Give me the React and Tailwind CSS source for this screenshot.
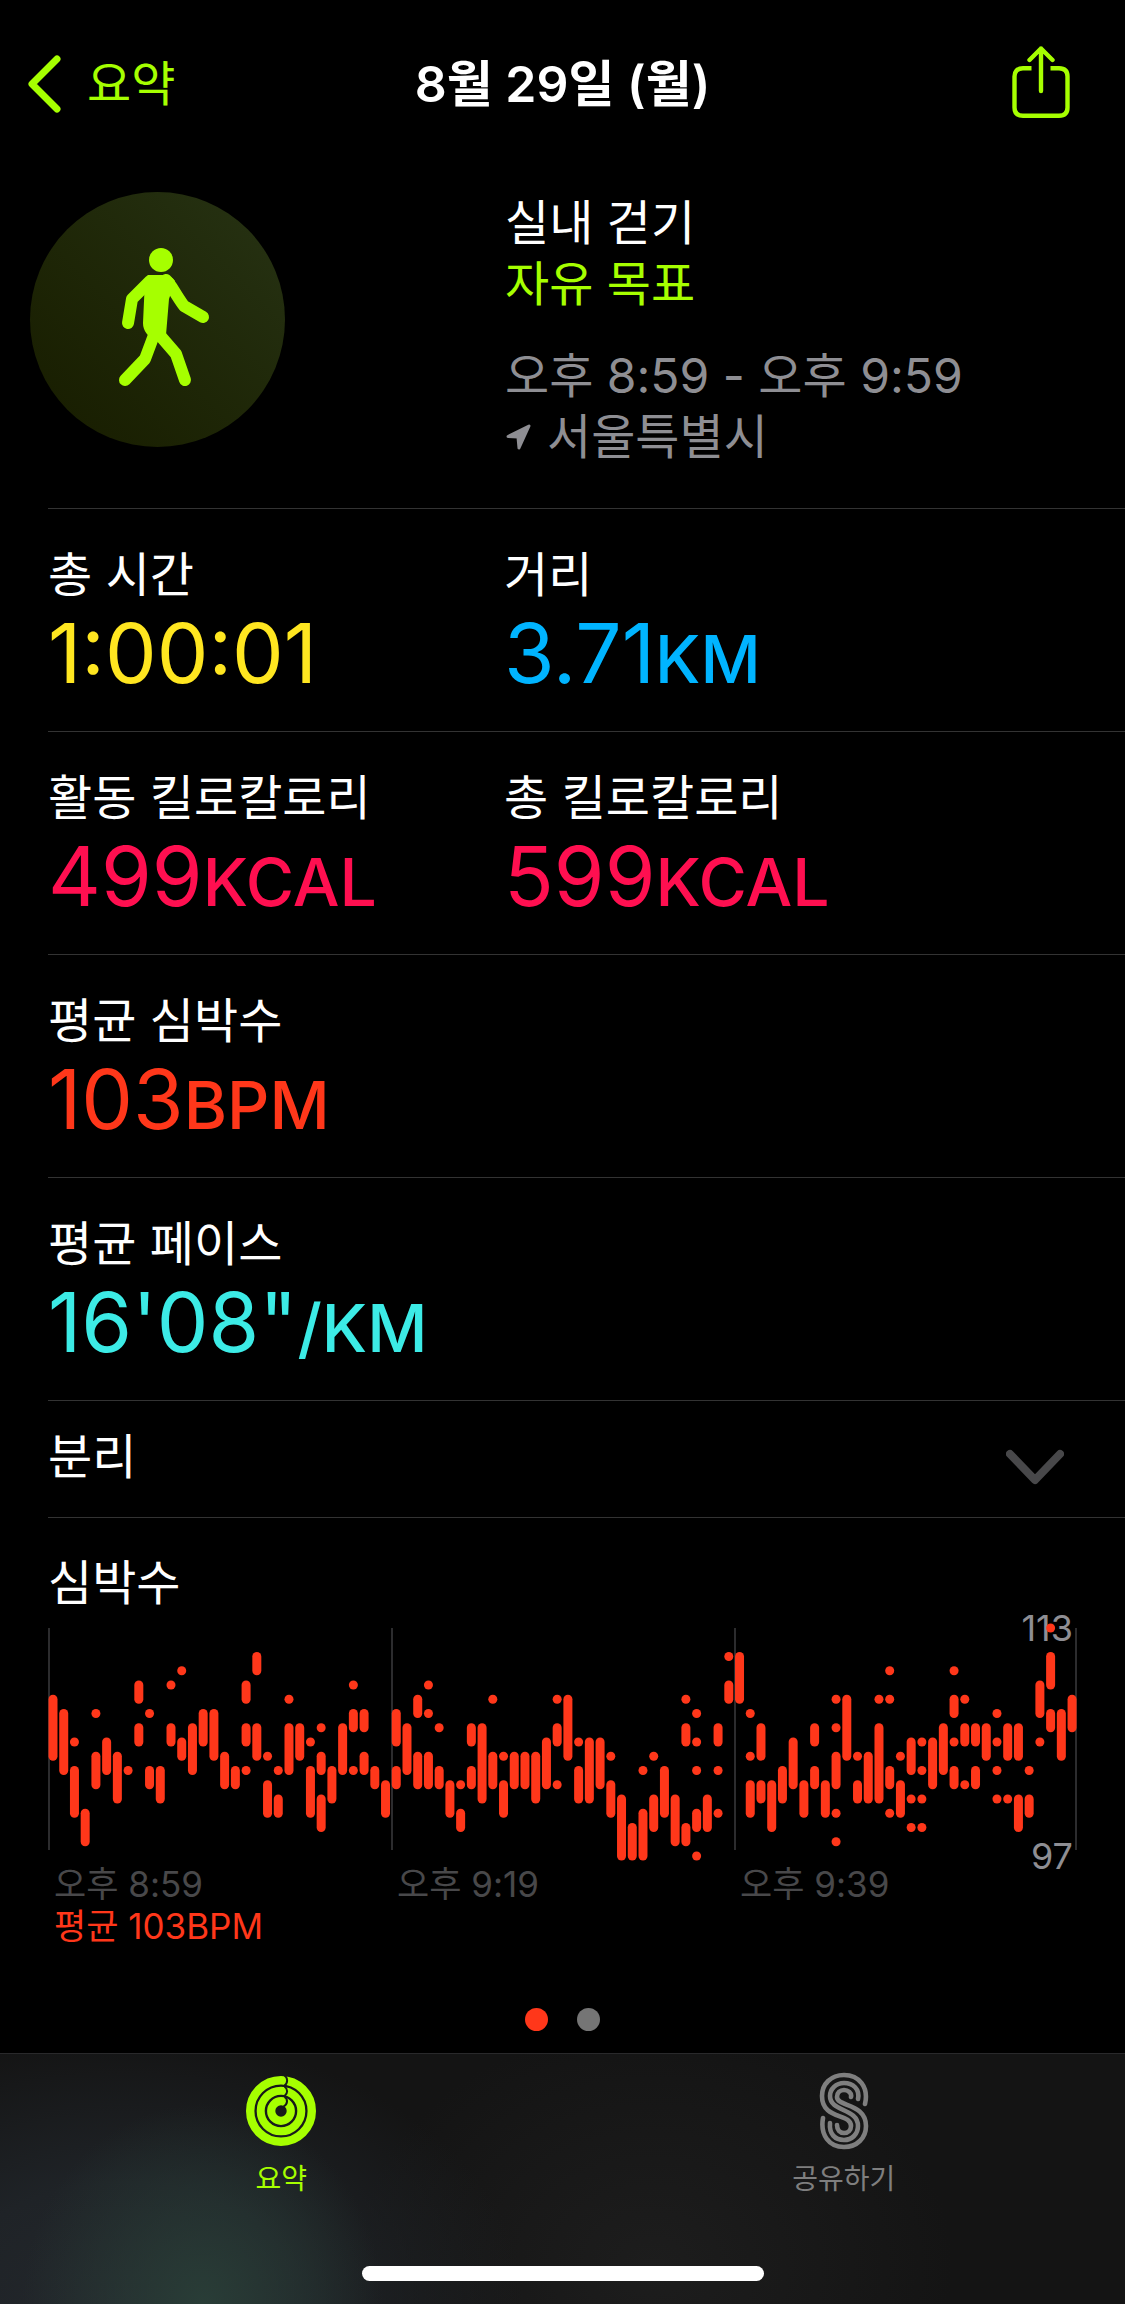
import React, { useState } from "react";

const GREEN = "#a6ff00";
const RED = "#ff371a";

// each slot lists [high, low] ranges in bpm, a lone value is [n, n]
const heartRate = [
  [[108, 104]],
  [[107, 103]],
  [[105, 105], [103, 100]],
  [[100, 98]],
  [[107, 107], [104, 102]],
  [[105, 103]],
  [[104, 101]],
  [[103, 103]],
  [[109, 108], [106, 105]],
  [[107, 107], [103, 102]],
  [[103, 101]],
  [[109, 109], [106, 105]],
  [[110, 110], [105, 104]],
  [[106, 103]],
  [[107, 105]],
  [[107, 104]],
  [[104, 102]],
  [[103, 102]],
  [[109, 108], [106, 105], [103, 103]],
  [[111, 110], [106, 104]],
  [[104, 104], [102, 100]],
  [[103, 103], [101, 100]],
  [[108, 108], [106, 103]],
  [[106, 104]],
  [[105, 105], [103, 100]],
  [[106, 106], [104, 103], [101, 99]],
  [[103, 101]],
  [[106, 103]],
  [[109, 109], [107, 106], [103, 103]],
  [[107, 106], [104, 103]],
  [[103, 102]],
  [[102, 100]],
  [[107, 105], [103, 102]],
  [[106, 103]],
  [[108, 107], [104, 102]],
  [[109, 109], [107, 107], [104, 102]],
  [[106, 106], [103, 102]],
  [[102, 100]],
  [[102, 102], [100, 99]],
  [[106, 105], [103, 102]],
  [[106, 101]],
  [[108, 108], [104, 102]],
  [[104, 104], [102, 100]],
  [[104, 102]],
  [[104, 102]],
  [[104, 101]],
  [[105, 102]],
  [[108, 108], [106, 105], [102, 102]],
  [[108, 104]],
  [[105, 105], [103, 101]],
  [[105, 101]],
  [[105, 102]],
  [[104, 104], [102, 100]],
  [[101, 97]],
  [[99, 97]],
  [[103, 103], [100, 97]],
  [[104, 104], [101, 99]],
  [[103, 100]],
  [[101, 98]],
  [[108, 108], [106, 105], [99, 98]],
  [[107, 107], [105, 105], [103, 103], [100, 99], [97, 97]],
  [[101, 99]],
  [[106, 105], [103, 103], [100, 100]],
  [[111, 111], [109, 108]],
  [[111, 108]],
  [[107, 107], [104, 104], [102, 100]],
  [[106, 104], [102, 101]],
  [[102, 99]],
  [[103, 101]],
  [[105, 102]],
  [[102, 100]],
  [[106, 105], [103, 102]],
  [[102, 100]],
  [[108, 108], [106, 106], [104, 102], [100, 100], [98, 98]],
  [[108, 104]],
  [[104, 104], [102, 101]],
  [[104, 101]],
  [[108, 108], [106, 101]],
  [[110, 110], [108, 108], [103, 102], [100, 100]],
  [[104, 104], [102, 100]],
  [[105, 103], [101, 101], [99, 99]],
  [[105, 105], [103, 103], [101, 101], [99, 99]],
  [[105, 102]],
  [[106, 103]],
  [[110, 110], [108, 107], [105, 105], [103, 102]],
  [[108, 108], [106, 105], [102, 102]],
  [[106, 105], [103, 102]],
  [[106, 104]],
  [[107, 107], [105, 105], [103, 103], [101, 101]],
  [[106, 104], [101, 101]],
  [[106, 104], [101, 99]],
  [[103, 103], [101, 100]],
  [[109, 107], [105, 105]],
  [[113, 113], [111, 109], [107, 106]],
  [[107, 104]],
  [[108, 106]],
];

const rows = [
  [
    { label: "총 시간", value: "1:00:01", unit: "", color: "text-[#ffe620]" },
    { label: "거리", value: "3.71", unit: "KM", color: "text-[#00b4ff]" },
  ],
  [
    { label: "활동 킬로칼로리", value: "499", unit: "KCAL", color: "text-[#ff0f50]" },
    { label: "총 킬로칼로리", value: "599", unit: "KCAL", color: "text-[#ff0f50]" },
  ],
  [{ label: "평균 심박수", value: "103", unit: "BPM", color: "text-[#ff371a]" }],
  [{ label: "평균 페이스", value: "16'08\"", unit: "/KM", color: "text-[#3cebe6]" }],
];

const slotX = (i) => 5 + i * 10.727;
const bpmY = (bpm) => 7 + (113 - bpm) * 14.25;

function WalkIcon() {
  return (
    <svg viewBox="0 0 255 255" className="h-full w-full" aria-hidden="true">
      <g fill={GREEN} stroke={GREEN} strokeLinecap="round" strokeLinejoin="round">
        <circle cx="131" cy="68" r="12" stroke="none" />
        <path
          d="M118 83h15c6 0 10 3 12 6l-6 18-3 36c-1 4-6 5-11 4-7-2-12-8-12-16l2-44z"
          stroke="none"
        />
        <path d="M120 89L102 107L98 131" fill="none" strokeWidth="12" />
        <path d="M136 88C141 92 145 102 154 114L173 125" fill="none" strokeWidth="12" />
        <path d="M127 135L115 167L95 188" fill="none" strokeWidth="12" />
        <path d="M127 140L146 162L155 188" fill="none" strokeWidth="12" />
      </g>
    </svg>
  );
}

function RingsIcon() {
  return (
    <svg viewBox="0 0 70 70" className="h-[70px] w-[70px]" fill="none" aria-hidden="true">
      <g stroke="currentColor">
        <circle cx="35" cy="35" r="30.8" strokeWidth="8.4" />
        <circle cx="35" cy="35" r="20.3" strokeWidth="8" />
        <circle cx="35" cy="35" r="9.8" strokeWidth="8.2" />
      </g>
      <g stroke="#171a1a" strokeWidth="2">
        <path d="M38.5 -0.5C42 2 42 7 38.5 9.5" />
        <path d="M38.5 10.5C42 13 42 17.5 38.5 20" />
        <path d="M38.5 21C42 23 42 28 37.5 30.5" />
      </g>
    </svg>
  );
}

function SharingIcon() {
  return (
    <svg
      viewBox="0 0 50 78"
      className="h-[78px] w-[50px]"
      fill="none"
      stroke="currentColor"
      strokeWidth="4.6"
      strokeLinecap="round"
      aria-hidden="true"
    >
      <path d="M46 32C50 15 40 3 25 3C12 3 3 12 3 24C3 48 32 41 32 54C32 58 29 61 25 61C21 61 18 58 18 53" />
      <path d="M39 27C41 17 34 11 25 11C17 11 11 17 11 24C11 40 39 36 39 54C39 62 33 68 25 68C16 68 10 62 11 51" />
      <path d="M32 25C33 21 29 18 25 18C21 18 18 21 18 25C18 35 47 31 47 54C47 66 38 75 25 75C10 75 1 63 4 46" />
    </svg>
  );
}

function HeartChart() {
  return (
    <svg viewBox="0 0 1029 242" className="relative block w-full" aria-hidden="true">
      {[1, 344, 687, 1028].map((x) => (
        <path key={x} d={`M${x} 7V229`} stroke="#2c2c2e" strokeWidth="2" />
      ))}
      <g stroke={RED} strokeWidth="9" strokeLinecap="round">
        {heartRate.map((ranges, i) =>
          ranges.map(([high, low]) => (
            <path
              key={`${i}-${high}`}
              d={`M${slotX(i)} ${bpmY(high)}V${bpmY(low) + 0.01}`}
            />
          ))
        )}
      </g>
    </svg>
  );
}

function Metric({ label, value, unit, color }) {
  return (
    <div>
      <dt className="text-[48px] leading-[60px]">{label}</dt>
      <dd className={`text-[82px] leading-[98px] ${color}`}>
        {value}
        <span className="text-[66px] leading-none font-medium">{unit}</span>
      </dd>
    </div>
  );
}

export default function App() {
  const [page, setPage] = useState(0);
  const [open, setOpen] = useState(false);
  const [tab, setTab] = useState("summary");

  return (
    <div className="flex min-h-screen flex-col bg-black font-['Inter','Noto_Sans_CJK_KR',sans-serif] text-white">
      {/* nav bar */}
      <header className="grid h-[168px] grid-cols-[1fr_auto_1fr] items-center px-[27px] text-[48px]">
        <a href="#summary" className="flex items-center gap-[26px] text-[#a6ff00]">
          <svg viewBox="0 0 34 58" className="h-[58px] w-[34px]" fill="none" aria-hidden="true">
            <path
              d="M30 4L5 29L30 54"
              stroke="currentColor"
              strokeWidth="7"
              strokeLinecap="round"
              strokeLinejoin="round"
            />
          </svg>
          요약
        </a>
        <h1 className="text-[50px] font-semibold">8월 29일 (월)</h1>
        <button
          type="button"
          aria-label="공유"
          className="mr-7 mb-1 justify-self-end text-[#a6ff00]"
        >
          <svg viewBox="0 0 58 72" className="h-[72px] w-[58px]" fill="none" aria-hidden="true">
            <g stroke="currentColor" strokeWidth="4.4">
              <path d="M19.5 22.2H11C5 22.2 2.5 25.5 2.5 30.5V61.5C2.5 67 5.5 69.7 11 69.7H47C52.5 69.7 55.5 67 55.5 61.5V30.5C55.5 25.5 53 22.2 47 22.2H38.5" />
              <path
                d="M29 45V2.5M17.5 14L29 2.5L40.5 14"
                strokeLinecap="round"
                strokeLinejoin="round"
              />
            </g>
          </svg>
        </button>
      </header>

      <main className="flex flex-1 flex-col">
        {/* workout summary */}
        <section className="grid grid-cols-[475px_1fr] items-start pt-6 pb-[41px] pl-[30px] text-[48px] leading-[61px]">
          <div className="h-[255px] w-[255px] rounded-full bg-linear-to-tr from-[#171c00] to-[#273314]">
            <WalkIcon />
          </div>
          <div>
            <h2>실내 걷기</h2>
            <p className="text-[#a6ff00]">자유 목표</p>
            <p className="mt-[31px] text-[#8e8e93]">오후 8:59 - 오후 9:59</p>
            <p className="flex items-center gap-4 text-[#8e8e93]">
              <svg viewBox="0 0 26 26" className="h-[26px] w-[26px]" aria-hidden="true">
                <path
                  d="M24 2L14 24L13 13L3 12.5Z"
                  fill="currentColor"
                  stroke="currentColor"
                  strokeWidth="3"
                  strokeLinejoin="round"
                />
              </svg>
              서울특별시
            </p>
          </div>
        </section>

        {/* metrics */}
        <div className="pl-12">
          {rows.map((row) => (
            <dl
              key={row[0].label}
              className="grid grid-cols-[456px_1fr] border-t border-[#333333] pt-9 pb-7"
            >
              {row.map((m) => (
                <Metric key={m.label} {...m} />
              ))}
            </dl>
          ))}

          <button
            type="button"
            aria-expanded={open}
            onClick={() => setOpen(!open)}
            className="flex h-[118px] w-full items-center justify-between border-y border-[#333333] pr-[61px] pb-1 text-[48px]"
          >
            분리
            <svg viewBox="0 0 58 36" className="mt-5 h-[36px] w-[58px]" fill="none" aria-hidden="true">
              <path
                d="M4 5L29 31L54 5"
                stroke="#48484a"
                strokeWidth="8"
                strokeLinecap="round"
                strokeLinejoin="round"
              />
            </svg>
          </button>
        </div>

        {/* heart rate */}
        <section className="pt-[35px] pr-12 pl-12">
          <h3 className="text-[48px] leading-[60px]">심박수</h3>
          <div className="relative mt-2">
            <span className="absolute -top-4 right-1 text-[36px] leading-[46px] text-[#8e8e93]">
              113
            </span>
            <HeartChart />
            <span className="absolute right-1 -bottom-4 text-[36px] leading-[46px] text-[#8e8e93]">
              97
            </span>
          </div>
          <div className="grid grid-cols-3 text-[35px] leading-[42px] text-[#48484a]">
            <span className="pl-1.5">오후 8:59</span>
            <span className="pl-1.5">오후 9:19</span>
            <span className="pl-1.5">오후 9:39</span>
          </div>
          <p className="pl-1.5 text-[35px] leading-[42px] text-[#ff371a]">평균 103BPM</p>
        </section>

        <div className="mt-auto flex justify-center gap-[29px] pb-[22px]">
          {[0, 1].map((n) => (
            <button
              key={n}
              type="button"
              aria-label={`${n + 1}`}
              onClick={() => setPage(n)}
              className={`h-[23px] w-[23px] rounded-full ${
                page === n ? "bg-[#ff371a]" : "bg-[#757575]"
              }`}
            />
          ))}
        </div>
      </main>

      {/* tab bar */}
      <footer className="flex h-[251px] flex-col items-center justify-between border-t border-[#29292b] bg-[#141414] bg-[radial-gradient(ellipse_180px_200px_at_18%_100%,#293d37_0%,#293d3700_100%),radial-gradient(ellipse_400px_270px_at_11%_100%,#23272c_0%,#1f2327_45%,#14141400_100%),radial-gradient(ellipse_300px_240px_at_58%_85%,#1d1d1d_0%,#14141400_100%)] pb-[23px]">
        <nav className="grid w-full grid-cols-2 pt-[17px] text-[28px] leading-[40px]">
          <button
            type="button"
            onClick={() => setTab("summary")}
            className={`flex flex-col items-center gap-2 ${
              tab === "summary" ? "text-[#a6ff00]" : "text-[#7f7f7f]"
            }`}
          >
            <span className="flex h-20 items-center">
              <RingsIcon />
            </span>
            요약
          </button>
          <button
            type="button"
            onClick={() => setTab("sharing")}
            className={`flex flex-col items-center gap-2 ${
              tab === "sharing" ? "text-[#a6ff00]" : "text-[#7f7f7f]"
            }`}
          >
            <span className="flex h-20 items-center">
              <SharingIcon />
            </span>
            공유하기
          </button>
        </nav>
        <div className="h-[15px] w-[402px] rounded-full bg-white" />
      </footer>
    </div>
  );
}
